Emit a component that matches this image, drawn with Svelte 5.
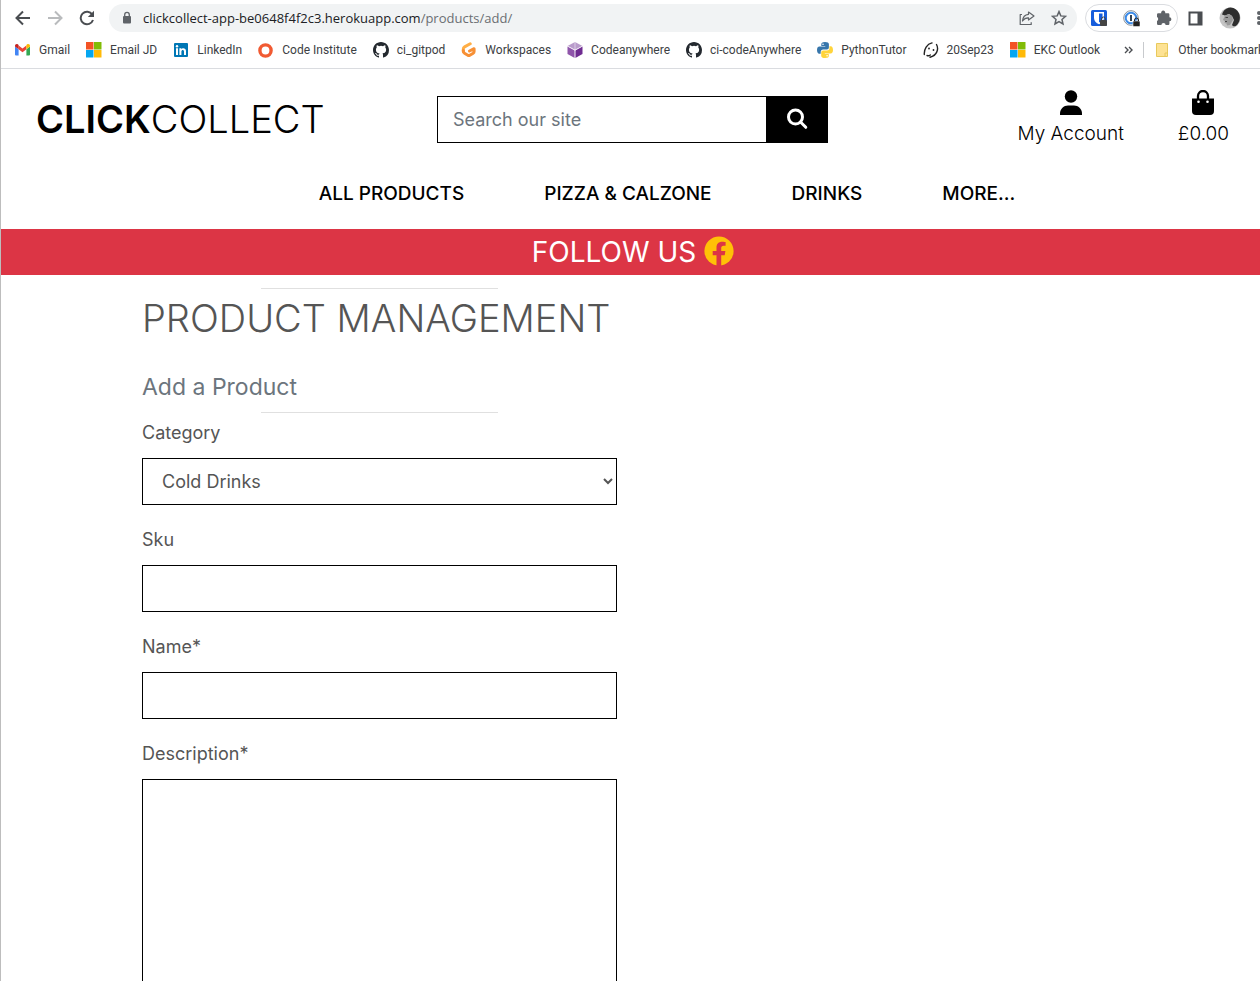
<script>
  const bookmarks = [
    { icon: 'gmail', label: 'Gmail' },
    { icon: 'microsoft', label: 'Email JD' },
    { icon: 'linkedin', label: 'LinkedIn' },
    { icon: 'ring', label: 'Code Institute' },
    { icon: 'github', label: 'ci_gitpod' },
    { icon: 'gitpod', label: 'Workspaces' },
    { icon: 'cube', label: 'Codeanywhere' },
    { icon: 'github', label: 'ci-codeAnywhere' },
    { icon: 'python', label: 'PythonTutor' },
    { icon: 'face', label: '20Sep23' },
    { icon: 'microsoft', label: 'EKC Outlook' }
  ];
  const links = ['ALL PRODUCTS', 'PIZZA & CALZONE', 'DRINKS', 'MORE...'];
</script>

{#snippet siteIcon(name)}
  <svg class="favicon" viewBox="0 0 16 16" aria-hidden="true">
    {#if name === 'gmail'}
      <path fill="#4285f4" d="M1 13.5h2.6V7.2L0 4.5v8q0 1 1 1z" />
      <path fill="#34a853" d="M11.4 13.5H14q1 0 1-1v-8l-3.6 2.7z" />
      <path fill="#ea4335" d="M3.6 7.2V3.4l3.9 3 3.9-3v3.8l-3.9 3z" />
      <path fill="#c5221f" d="M0 4.5V4c0-1.7 1.8-2.5 3-1.4l.6.5v4.1z" />
      <path fill="#fbbc04" d="M15 4.5V4c0-1.700-1.800-2.500-3-1.400l-.6.5v4.100z" />
    {:else if name === 'microsoft'}
      <path fill="#f35325" d="M0 0h7.500v7.500H0z" /><path fill="#81bc06" d="M8 0h7.500v7.500H8z" />
      <path fill="#05a6f0" d="M0 8h7.500v7.500H0z" /><path fill="#ffba08" d="M8 8h7.500v7.500H8z" />
    {:else if name === 'linkedin'}
      <rect x="1" y="1" width="14" height="14" rx="1" fill="#0077b5" />
      <path fill="#fff" d="M3 6.3h2V13H3zM6.4 6.3h1.9v.9c.8-1.5 4.7-1.7 4.7 1.8v4h-2V9.5c0-2.2-2.6-2-2.6 0V13h-2z" />
      <circle cx="4" cy="4.2" r="1.2" fill="#fff" />
    {:else if name === 'ring'}
      <circle cx="7.5" cy="8.5" r="5.6" fill="none" stroke="#f15a32" stroke-width="3.4" />
    {:else if name === 'github'}
      <path fill="#24292f" fill-rule="evenodd" d="M8 0C3.58 0 0 3.58 0 8c0 3.54 2.29 6.53 5.47 7.59.4.07.55-.17.55-.38 0-.19-.01-.82-.01-1.49-2.01.37-2.53-.49-2.69-.94-.09-.23-.48-.94-.82-1.13-.28-.15-.68-.52-.01-.53.63-.01 1.08.58 1.23.82.72 1.21 1.87.87 2.33.66.07-.52.28-.87.51-1.07-1.78-.2-3.64-.89-3.64-3.95 0-.87.31-1.59.82-2.15-.08-.2-.36-1.02.08-2.12 0 0 .67-.21 2.2.82a7.6 7.6 0 0 1 4 0c1.53-1.04 2.2-.82 2.2-.82.44 1.1.16 1.92.08 2.12.51.56.82 1.27.82 2.15 0 3.07-1.87 3.75-3.65 3.95.29.25.54.73.54 1.48 0 1.07-.01 1.93-.01 2.2 0 .21.15.46.55.38A8 8 0 0 0 16 8c0-4.42-3.58-8-8-8z" />
    {:else if name === 'gitpod'}
      <path fill="none" stroke="#ffae45" stroke-width="3" stroke-linecap="round" stroke-linejoin="round" d="M9.2 1.8 3.6 4.9Q2.3 5.6 2.3 7v2.5" />
      <path fill="none" stroke="#f79035" stroke-width="3" stroke-linecap="round" stroke-linejoin="round" d="M2.3 8.5q0 2 1.2 2.7l3.3 2q1 .6 2 0l3.4-2q.9-.5.9-1.7V6.7L8.5 9" />
    {:else if name === 'cube'}
      <path fill="#b99ccb" d="m8 0 7.5 4L8 8 .5 4z" /><path fill="#8f55aa" d="M.5 4.5 7.7 8.4V16L.5 12z" />
      <path fill="#6f2c91" d="M15.5 4.5 8.3 8.4V16l7.2-4z" /><path stroke="#fff" stroke-width=".5" d="M8 0v16M.5 4 8 8l7.500-4" fill="none" />
    {:else if name === 'python'}
      <path fill="#3776ab" d="M8 0C5 0 4.3 1 4.3 2.3v1.6h4v.7H2.4C1 4.6 0 5.7 0 8s1 3.7 2.2 3.7h1.5V9.8c0-1.3 1-2.3 2.4-2.3h3.8c1.1 0 2-.9 2-2V2.3C11.900 .7 10.500 0 8 0z" />
      <path fill="#ffd43b" d="M8.100 16c3 0 3.700-1 3.700-2.300v-1.600h-4v-.7h5.900c1.400 0 2.300-1.100 2.300-3.400s-.9-3.700-2.200-3.700h-1.400v1.900c0 1.300-1 2.300-2.400 2.300H6.200c-1.100 0-2 .9-2 2v3.200C4.200 15.300 5.600 16 8.100 16z" />
      <circle cx="6" cy="2.200" r=".8" fill="#fff" /><circle cx="10.100" cy="13.800" r=".8" fill="#fff" />
    {:else if name === 'face'}
      <path fill="none" stroke="#222" stroke-width="1.400" stroke-linecap="round" d="M9 .9C4 2 .9 7 1.300 12.500M13.500 2.500c2.500 4.500.5 11-6.500 12.700M4 13.500c1.400.5 2.400.2 3.300-.5" />
      <circle cx="6" cy="6.500" r=".9" fill="#222" /><circle cx="10.500" cy="8" r=".9" fill="#222" />
    {/if}
  </svg>
{/snippet}

<div class="window">
  <div class="toolbar">
    <button class="tool" aria-label="Back"><svg width="16" height="16" viewBox="0 0 16 16"><path d="M15 8H2M8 1.500 1.500 8 8 14.500" fill="none" stroke="#4a4d51" stroke-width="2" /></svg></button>
    <button class="tool" aria-label="Forward"><svg width="16" height="16" viewBox="0 0 16 16"><path d="M1 8h13M8 1.500 14.500 8 8 14.500" fill="none" stroke="#b9bbbd" stroke-width="2" /></svg></button>
    <button class="tool" aria-label="Reload"><svg width="16" height="16" viewBox="0 0 16 16"><path d="M13.300 4.500A6.300 6.300 0 1 0 14 10" fill="none" stroke="#4a4d51" stroke-width="2" /><path fill="#4a4d51" d="M15 .8V7H8.800z" /></svg></button>
    <div class="address">
      <svg width="10" height="14" viewBox="0 0 10 14" aria-hidden="true"><rect y="5" x="1" width="8" height="7.500" rx="1" fill="#5f6368" /><path d="M2.700 6V3.700a2.300 2.300 0 0 1 4.600 0V6" fill="none" stroke="#5f6368" stroke-width="1.300" /></svg>
      <span class="url">clickcollect-app-be0648f4f2c3.herokuapp.com<span class="path">/products/add/</span></span>
      <button class="tool" aria-label="Share"><svg width="16" height="16" viewBox="0 0 16 16"><path d="M3 4.500H1.200v10h11v-2.300M9.500 2l5.500 4-5.500 4V7.800Q6 7.500 3.500 11 4 4.800 9.500 4.300z" fill="none" stroke="#5f6368" stroke-width="1.200" stroke-linejoin="round" /></svg></button>
      <button class="tool" aria-label="Bookmark this page"><svg width="16" height="16" viewBox="0 0 16 16"><path d="m8 1.600 1.800 4.300 4.700.4L11 9.400l1 4.600-4-2.400L4 14l1-4.600-3.500-3.100 4.700-.4z" fill="none" stroke="#5f6368" stroke-width="1.500" /></svg></button>
    </div>
    <div class="extensions">
      <button class="tool" aria-label="Password manager"><svg width="16" height="16" viewBox="0 0 16 16"><rect width="16" height="16" rx="1.500" fill="#175ddc" /><path d="M3 2h10v6c0 3-2 5-5 6.300C5 13 3 11 3 8z" fill="#fff" /><path d="M8 3.500h3.500V8c0 2-1.500 3.500-3.500 4.500z" fill="#175ddc" /><rect x="9" y="10" width="7" height="6" rx="1" fill="#444" /><path d="M10.500 10V9a2 2 0 0 1 4 0v1" fill="none" stroke="#444" /></svg></button>
      <button class="tool" aria-label="Account login"><svg width="17" height="17" viewBox="0 0 17 17"><circle cx="8" cy="8" r="7.300" fill="#fff" stroke="#8a9299" /><circle cx="8" cy="8" r="5.300" fill="#fff" stroke="#3c8be8" stroke-width="2" /><path d="M8 5v6" stroke="#345" stroke-width="2" /><rect x="10" y="11" width="7" height="5.500" rx="1" fill="#222" stroke="#fff" stroke-width=".5" /><path d="M11.500 11v-1a2 2 0 0 1 4 0v1" fill="none" stroke="#222" /></svg></button>
      <button class="tool" aria-label="Extensions"><svg width="16" height="16" viewBox="0 0 16 16"><path fill="#5f6368" d="M1 4.500q0-1.200 1.200-1.200h3a2.100 2.100 0 1 1 4 0h3q1.200 0 1.200 1.200v2.700a2 2 0 1 1 0 4v2.600q0 1.200-1.200 1.200H9.600a2.100 2.100 0 0 0-4.200 0H2.200Q1 15 1 13.800v-2.900a2.100 2.100 0 0 0 0-3.800z" /></svg></button>
    </div>
    <button class="tool panel" aria-label="Side panel"><svg width="15" height="15" viewBox="0 0 15 15"><path fill="#4a4d51" fill-rule="evenodd" d="M.5.500h14v14H.5zM2.500 2.500v10h7v-10z" /></svg></button>
    <button class="tool" aria-label="Profile"><svg width="22" height="22" viewBox="0 0 22 22"><circle cx="11" cy="11" r="10.500" fill="#c4c4c4" /><path fill="#2e2e2e" d="M4 5C7 0 13-1 17 2.500c5 4 5 11 1 15.500-2 2-4 1.500-5 0l2-5-2-4-3-2-4 1.500-3-1z" /><path fill="#999" d="m6 8.500 4-1.500 3 2 1 4-3 5-3 .5-.5-2-2-.5.5-2-2-1z" /><path d="M6.500 10.500H9M6 14.500h2" stroke="#444" /></svg></button>
    <button class="tool dots" aria-label="Menu"><svg width="6" height="16" viewBox="0 0 6 16"><circle cx="3" cy="3" r="2" fill="#5f6368" /><circle cx="3" cy="8" r="2" fill="#5f6368" /><circle cx="3" cy="13" r="2" fill="#5f6368" /></svg></button>
  </div>

  <nav class="bookmarks" aria-label="Bookmarks">
    {#each bookmarks as b}
      <a href="#top">{@render siteIcon(b.icon)}{b.label}</a>
    {/each}
    <button class="tool more" aria-label="More bookmarks"><svg width="9" height="8" viewBox="0 0 9 8"><path d="m1 1 3 3-3 3M5 1l3 3-3 3" fill="none" stroke="#4a4d51" stroke-width="1.400" /></svg></button>
    <a class="other" href="#top"><svg width="12" height="14" viewBox="0 0 12 14" aria-hidden="true"><path d="M.5.5h11v13H.5z" fill="#fde293" stroke="#e8c95c" /><path d="M9 13.500V10h2.500" fill="none" stroke="#e8c95c" /></svg>Other bookmarks</a>
  </nav>

  <header>
    <div class="masthead">
      <a class="logo" href="#top"><strong>CLICK</strong>COLLECT</a>
      <form class="search">
        <input type="text" aria-label="Search our site" placeholder="Search our site" />
        <button type="button" aria-label="Search"><svg width="22" height="22" viewBox="0 0 22 22"><circle cx="9.500" cy="9" r="7" fill="none" stroke="#fff" stroke-width="3" /><path d="m14.500 14 5.300 5.300" stroke="#fff" stroke-width="3" stroke-linecap="round" /></svg></button>
      </form>
      <a class="account" href="#top">
        <svg width="22" height="26" viewBox="0 0 22 26" aria-hidden="true"><circle cx="11" cy="6.500" r="6.200" /><path d="M0 25v-1.500C0 18.800 3.800 15.500 8 15.500h6c4.200 0 8 3.300 8 8V25z" /></svg>
        My Account
      </a>
      <a class="bag" href="#top">
        <svg width="24" height="26" viewBox="0 0 24 26" aria-hidden="true"><path d="M1 8.500h22V21q0 4-4 4H5q-4 0-4-4z" /><path d="M7 12V6a5 5 0 0 1 10 0v6" fill="none" stroke="#000" stroke-width="2.300" /><circle cx="7.500" cy="11.800" r="1.300" fill="#fff" /><circle cx="16.500" cy="11.800" r="1.300" fill="#fff" /></svg>
        £0.00
      </a>
    </div>
    <nav class="menu" aria-label="Products">
      {#each links as link}<a href="#top">{link}</a>{/each}
    </nav>
  </header>

  <div class="banner">
    FOLLOW US
    <a href="#top" aria-label="Facebook"><svg width="30" height="30" viewBox="0 0 30 30"><circle cx="15" cy="15" r="14.600" fill="#ffc107" /><path fill="#dc3545" d="M12.500 30V19.200H8.700v-4.300h3.800v-3.300c0-3.800 2.200-5.900 5.700-5.900 1.700 0 3.400.3 3.400.3v3.700h-1.900c-1.900 0-2.500 1.200-2.500 2.400v2.800h4.200l-.7 4.300h-3.500V30z" /></svg></a>
  </div>

  <main>
    <form class="product">
      <hr />
      <h1>PRODUCT MANAGEMENT</h1>
      <h2>Add a Product</h2>
      <hr />
      <div class="field">
        <label for="category">Category</label>
        <select id="category"><option>Cold Drinks</option></select>
      </div>
      <div class="field"><label for="sku">Sku</label><input id="sku" type="text" /></div>
      <div class="field"><label for="name">Name*</label><input id="name" type="text" /></div>
      <div class="field"><label for="description">Description*</label><textarea id="description" rows="10"></textarea></div>
    </form>
  </main>
</div>

<style>
  :global(body) { margin: 0; background: #fff; }
  .window, .window * { box-sizing: border-box; }
  .window {
    height: 100vh;
    overflow: hidden;
    border-left: 1px solid #bdbdbd;
    font-family: Inter, sans-serif;
    font-size: 18px;
    line-height: 27px;
    color: #555;
  }
  a { color: inherit; text-decoration: none; }
  button { border: 0; padding: 0; background: none; }
  .tool { display: flex; flex: none; }

  .toolbar {
    display: flex;
    align-items: center;
    gap: 16px;
    height: 36px;
    padding-left: 14px;
    font-family: "Open Sans", sans-serif;
  }
  .address {
    flex: 1;
    min-width: 0;
    display: flex;
    align-items: center;
    gap: 16px;
    height: 28px;
    margin: 0 -8px 0 -2px;
    padding: 0 10px 0 13px;
    border-radius: 14px;
    background: #f1f3f4;
  }
  .url { flex: 1; margin-left: -5px; font-size: 13px; color: #202124; white-space: nowrap; }
  .path { color: #6b6e72; }
  .extensions {
    display: flex;
    align-items: center;
    gap: 16px;
    height: 28px;
    padding: 0 5px;
    border: 1px solid #dadce0;
    border-radius: 14px;
  }
  .panel { margin-left: -6px; }
  .dots { width: 4px; margin-left: -1px; }
  .dots svg { flex: none; }

  .bookmarks {
    display: flex;
    align-items: center;
    gap: 16px;
    height: 33px;
    padding: 0 0 5px 14px;
    border-bottom: 1px solid #dadce0;
    font: 12px/16px Roboto, sans-serif;
    color: #3c4043;
    white-space: nowrap;
  }
  .bookmarks a { display: flex; flex: none; align-items: center; gap: 8px; }
  .favicon { width: 16px; height: 16px; }
  .more { margin-left: 8px; }
  .bookmarks .other { margin-left: -6px; padding-left: 12px; gap: 10px; border-left: 1px solid #c8cacd; }

  header { height: 160px; color: #000; }
  .masthead { display: flex; align-items: center; height: 100px; padding: 0 31px 0 35px; }
  .logo { width: 401px; font-size: 38px; line-height: 44px; font-weight: 300; }
  .logo strong { font-weight: 600; }
  .search { display: flex; width: 391px; height: 47px; margin-right: auto; }
  .search input { flex: 1; min-width: 0; border: 1px solid #000; border-right: 0; border-radius: 0; padding: 6px 15px; font: inherit; }
  .search input::placeholder { color: #6c757d; }
  .search button { width: 62px; display: grid; place-items: center; background: #000; }
  .account, .bag { display: flex; flex-direction: column; align-items: center; gap: 4px; padding-bottom: 2px; font-size: 19px; font-weight: 300; }
  .account { margin-right: 54px; }
  .menu { display: flex; justify-content: center; gap: 80px; padding: 11px 0 0 73px; font-size: 19px; font-weight: 500; }

  .banner {
    display: flex;
    align-items: center;
    justify-content: center;
    gap: 8px;
    height: 46px;
    padding-left: 5px;
    background: #dc3545;
    color: #fff;
    font-size: 28px;
  }
  .banner a { display: flex; margin-top: -2px; }

  .product { max-width: 616px; padding: 13px 0 0 141px; }
  hr { width: 50%; height: 1px; margin: 0 auto; border: 0; background: #e0e0e0; }
  h1, h2 { margin: 0; white-space: nowrap; }
  h1 { padding: 6px 0 26px; font-size: 38px; line-height: 46px; font-weight: 300; }
  h2 { padding: 5px 0 10px; font-size: 23px; line-height: 30px; font-weight: 400; color: #6c757d; }
  .field { display: flex; flex-direction: column; gap: 12px; padding-top: 6px; margin-bottom: 15px; }
  .field input, .field select, .field textarea {
    width: 100%;
    height: 47px;
    border: 1px solid #000;
    border-radius: 0;
    padding: 6px 15px;
    background: #fff;
    color: #555;
    font: inherit;
  }
  .field select { padding-right: 1px; }
  .field textarea { height: auto; resize: none; }
</style>
